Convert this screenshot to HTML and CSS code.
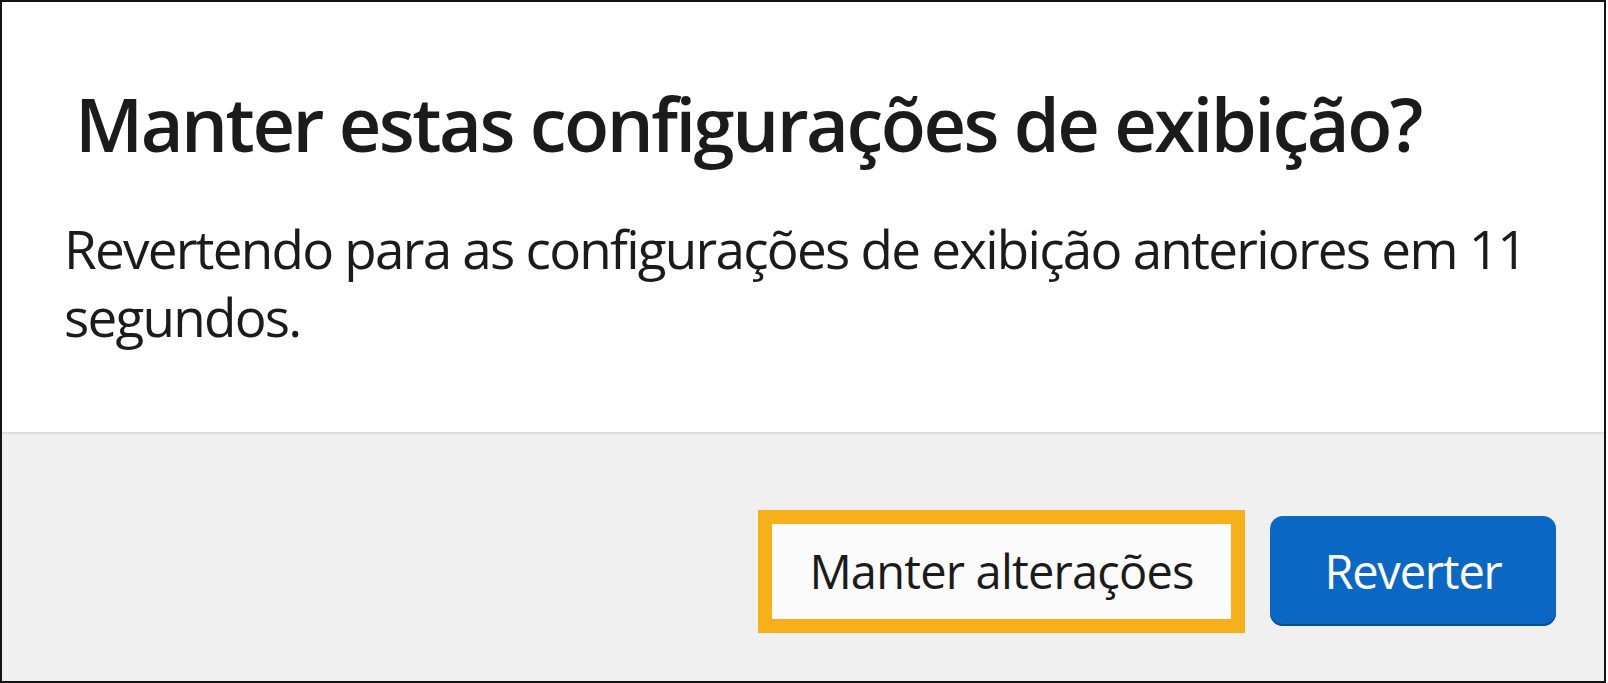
FILE: index.html
```html
<!DOCTYPE html>
<html lang="pt">
<head>
<meta charset="utf-8">
<title>Manter estas configurações de exibição?</title>
<link rel="stylesheet" href="styles.css">
</head>
<body>
<div class="frame">
  <div class="content">
    <h1 class="title">Manter estas configurações de exibição?</h1>
    <p class="message">Revertendo para as configurações de exibição anteriores em 11 segundos.</p>
  </div>
  <div class="footer">
    <div class="highlight">
      <button class="btn btn-secondary">Manter alterações</button>
    </div>
    <button class="btn btn-primary">Reverter</button>
  </div>
</div>
</body>
</html>
```

FILE: styles.css
```css
html, body {
  margin: 0;
  padding: 0;
  background: #ffffff;
}
body {
  font-family: "Open Sans", "Noto Sans", sans-serif;
  color: #1b1b1b;
}
.frame {
  width: 1606px;
  height: 683px;
  box-sizing: border-box;
  border: 2px solid #141414;
  display: flex;
  flex-direction: column;
}
.content {
  background: #ffffff;
  height: 430px;
  padding: 0 30px 0 62px;
  box-sizing: border-box;
}
.title {
  margin: 0;
  padding-top: 77px;
  padding-left: 11px;
  font-size: 74px;
  font-weight: 600;
  line-height: 90px;
  letter-spacing: -2.5px;
}
.message {
  margin: 46px 0 0 0;
  font-size: 53px;
  font-weight: 400;
  line-height: 68px;
  letter-spacing: -1.75px;
}
.footer {
  flex: 1;
  background: #f0f0f0;
  border-top: 2px solid #dedede;
  display: flex;
  justify-content: flex-end;
  align-items: center;
  gap: 25px;
  padding-right: 48px;
  padding-top: 27px;
}
.highlight {
  border: 14px solid #f7b01a;
  display: flex;
}
.btn {
  font-family: "Open Sans", "Noto Sans", sans-serif;
  font-size: 47px;
  letter-spacing: -0.8px;
  border: none;
  margin: 0;
  cursor: pointer;
}
.btn-secondary {
  width: 459px;
  height: 95px;
  background: #fbfbfb;
  color: #1b1b1b;
}
.btn-primary {
  width: 286px;
  height: 110px;
  background: #0a67c4;
  color: #ffffff;
  border-radius: 13px;
  box-shadow: inset 0 -2px 0 #08509a;
  letter-spacing: -1.2px;
}
```
